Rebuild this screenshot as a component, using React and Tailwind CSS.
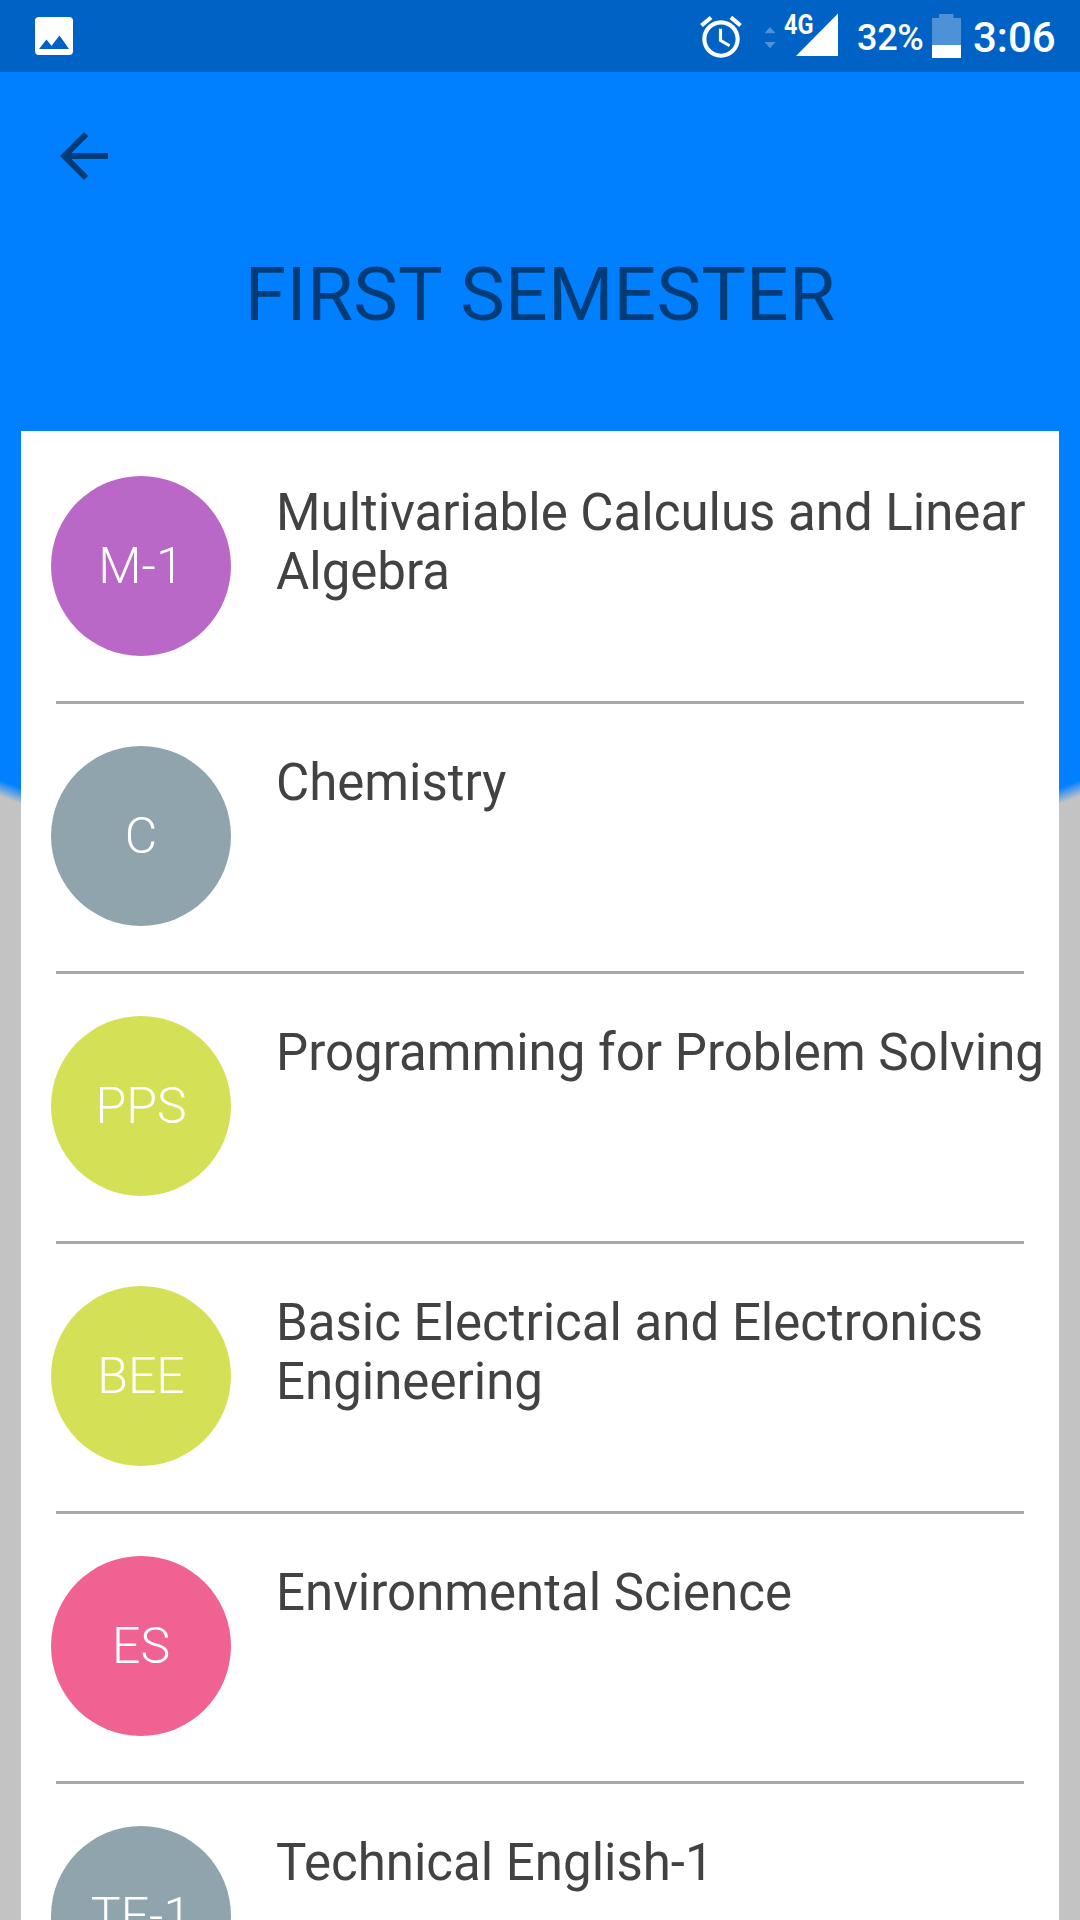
const subjects = [
  { code: "M-1", name: "Multivariable Calculus and Linear Algebra", color: "bg-[#ba68c8]" },
  { code: "C", name: "Chemistry", color: "bg-[#90a4ae]" },
  { code: "PPS", name: "Programming for Problem Solving", color: "bg-[#d4e157]" },
  { code: "BEE", name: "Basic Electrical and Electronics Engineering", color: "bg-[#d4e157]" },
  { code: "ES", name: "Environmental Science", color: "bg-[#f06292]" },
  { code: "TE-1", name: "Technical English-1", color: "bg-[#90a4ae]" },
];

function StatusBar() {
  return (
    <div className="flex h-[72px] items-start bg-[#0062c4] pl-[35px] text-white">
      <svg className="mt-[17px] h-[38px] w-[38px]" viewBox="0 0 38 38">
        <rect width="38" height="38" rx="4" fill="#fff" />
        <path d="M4 32l7.5-9.5 5 6.3 8-10.300 9.500 13.500z" fill="#0062c4" />
      </svg>
      <svg className="mt-[11.5px] ml-[622.5px] h-[50px] w-[50px]" viewBox="0 0 24 24" fill="currentColor">
        <path d="M22 5.72l-4.600-3.860-1.290 1.530 4.600 3.860L22 5.720zM7.880 3.390L6.600 1.860 2 5.710l1.290 1.530 4.590-3.850zM12.500 8H11v6l4.750 2.850.75-1.230-4-2.370V8zM12 4c-4.970 0-9 4.030-9 9s4.020 9 9 9c4.970 0 9-4.030 9-9s-4.030-9-9-9zm0 16c-3.870 0-7-3.130-7-7s3.130-7 7-7 7 3.130 7 7-3.130 7-7 7z" />
      </svg>
      <svg className="mt-[27px] ml-[18.5px] h-[22px] w-[12px]" viewBox="0 0 12 22" fill="#4d91d6">
        <path d="M.5 6.300L6 0l5.500 6.300zM.5 15L6 21.300 11.500 15z" />
      </svg>
      <div className="relative ml-[20px] h-[72px] w-[42px]">
        <svg className="mt-[13px] h-[43px] w-[42px]" viewBox="0 0 42 43" fill="currentColor">
          <path d="M42 .5V43H0z" />
        </svg>
        <span className="absolute top-[10px] -left-[12px] origin-left scale-x-[0.84] text-[28px] leading-[30px] font-bold">4G</span>
      </div>
      <span className="mt-[17px] ml-[19px] w-[75px] text-[36px] leading-[42px] font-medium tracking-[-0.3px]">32%</span>
      <svg className="mt-[14px] h-[44px] w-[29px]" viewBox="0 0 29 44">
        <path d="M7 0h14.500v4H29v40H0V4h7z" fill="#4d91d6" />
        <path d="M0 31h29v13H0z" fill="#fff" />
      </svg>
      <span className="mt-[13px] ml-[12px] text-[42px] leading-[49px] font-medium">3:06</span>
    </div>
  );
}

function SubjectRow({ code, name, color }) {
  return (
    <li className="h-[270px] shrink-0 pt-[45px]">
      <div className="flex h-[225px]">
        <div className={`ml-[30px] flex h-[180px] w-[180px] shrink-0 items-center justify-center rounded-full text-[50px] leading-[60px] font-light text-white ${color}`}>
          {code}
        </div>
        <h2 className="mt-[7px] ml-[45px] w-[775px] text-[51px] leading-[59px] text-[#424242]">{name}</h2>
      </div>
      <div className="mx-[35px] h-[3px] bg-[#a8a8a8]" />
    </li>
  );
}

export default function App() {
  return (
    <div className="flex h-[1920px] w-[1080px] flex-col overflow-hidden bg-[radial-gradient(circle_at_540px_-540px,#0080ff_1426px,#c3c3c3_1441px)] font-['Roboto',sans-serif]">
      <StatusBar />
      <header className="h-[359px] shrink-0 pt-[48px]">
        <svg className="ml-[48px] h-[72px] w-[72px]" viewBox="0 0 24 24" fill="#003c78">
          <path d="M20 11H7.830l5.590-5.590L12 4l-8 8 8 8 1.410-1.410L7.830 13H20v-2z" />
        </svg>
        <h1 className="mt-[58px] text-center text-[75px] leading-[88px] tracking-[0.2px] text-[#003c78]">FIRST SEMESTER</h1>
      </header>
      <ul className="mx-[21px] flex min-h-0 flex-1 flex-col overflow-hidden bg-white">
        {subjects.map((subject) => (
          <SubjectRow key={subject.code} {...subject} />
        ))}
      </ul>
    </div>
  );
}
